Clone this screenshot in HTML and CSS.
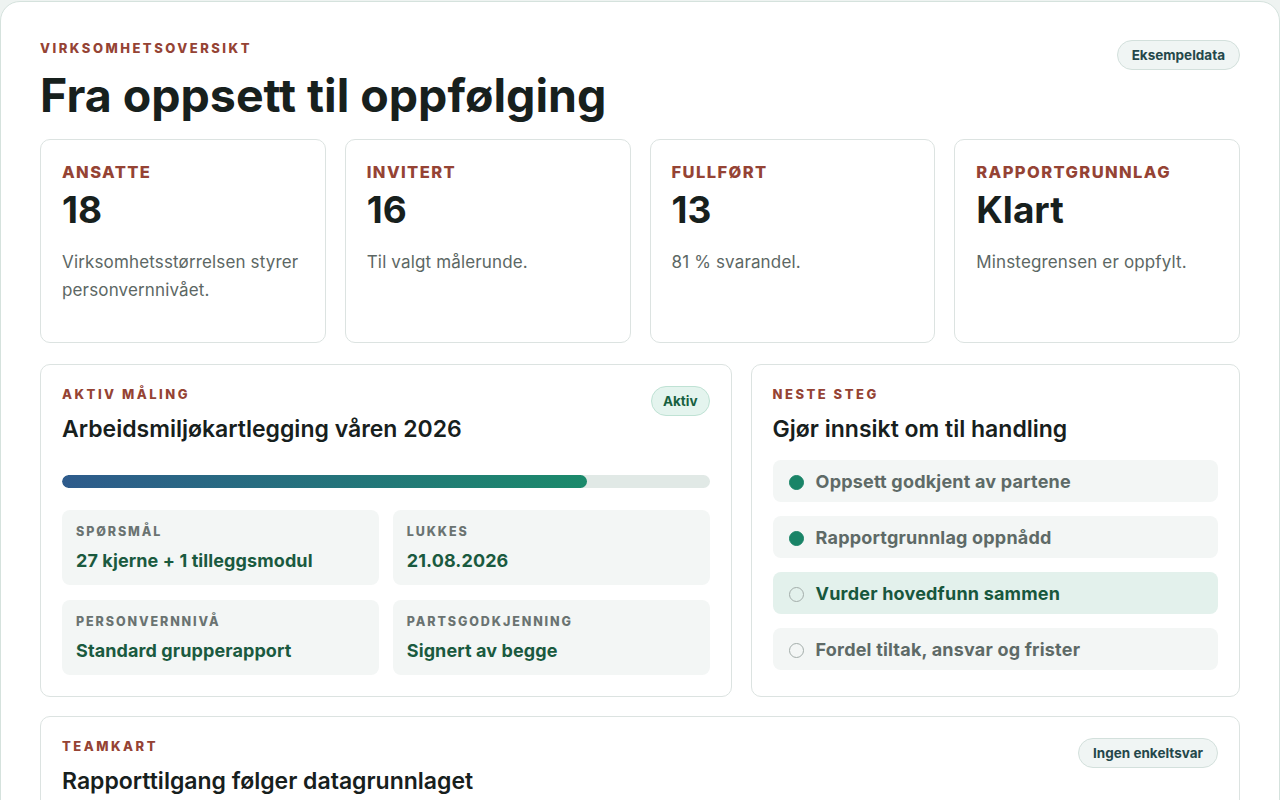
FILE: index.html
```html
<!DOCTYPE html>
<html lang="nb">
<head>
    <meta charset="UTF-8">
    <meta name="viewport" content="width=device-width, initial-scale=1.0">
    <title>Virksomhetsoversikt</title>
    <link rel="stylesheet" href="styles.css">
</head>
<body>
    <div class="panel">
        <div class="pageHead">
            <div>
                <div class="eyebrow">Virksomhetsoversikt</div>
                <h1 class="pageTitle">Fra oppsett til oppfølging</h1>
            </div>
            <span class="pill">Eksempeldata</span>
        </div>

        <!-- nøkkeltall -->
        <div class="stats">
            <div class="card stat">
                <div class="statLabel">Ansatte</div>
                <div class="statValue">18</div>
                <p class="statText">Virksomhetsstørrelsen styrer personvernnivået.</p>
            </div>
            <div class="card stat">
                <div class="statLabel">Invitert</div>
                <div class="statValue">16</div>
                <p class="statText">Til valgt målerunde.</p>
            </div>
            <div class="card stat">
                <div class="statLabel">Fullført</div>
                <div class="statValue">13</div>
                <p class="statText">81 % svarandel.</p>
            </div>
            <div class="card stat">
                <div class="statLabel">Rapportgrunnlag</div>
                <div class="statValue">Klart</div>
                <p class="statText">Minstegrensen er oppfylt.</p>
            </div>
        </div>

        <div class="split">
            <div class="card section">
                <div class="sectionHead">
                    <div>
                        <div class="eyebrow">Aktiv måling</div>
                        <h2 class="sectionTitle">Arbeidsmiljøkartlegging våren 2026</h2>
                    </div>
                    <span class="pill pillGreen">Aktiv</span>
                </div>
                <div class="progress">
                    <div class="progressFill" style="width: 81%"></div>
                </div>
                <div class="facts">
                    <div class="fact">
                        <div class="factLabel">Spørsmål</div>
                        <div class="factValue">27 kjerne + 1 tilleggsmodul</div>
                    </div>
                    <div class="fact">
                        <div class="factLabel">Lukkes</div>
                        <div class="factValue">21.08.2026</div>
                    </div>
                    <div class="fact">
                        <div class="factLabel">Personvernnivå</div>
                        <div class="factValue">Standard grupperapport</div>
                    </div>
                    <div class="fact">
                        <div class="factLabel">Partsgodkjenning</div>
                        <div class="factValue">Signert av begge</div>
                    </div>
                </div>
            </div>

            <div class="card section">
                <div class="eyebrow">Neste steg</div>
                <h2 class="sectionTitle">Gjør innsikt om til handling</h2>
                <ul class="steps">
                    <li class="step done"><span class="dot"></span>Oppsett godkjent av partene</li>
                    <li class="step done"><span class="dot"></span>Rapportgrunnlag oppnådd</li>
                    <li class="step current"><span class="dot"></span>Vurder hovedfunn sammen</li>
                    <li class="step"><span class="dot"></span>Fordel tiltak, ansvar og frister</li>
                </ul>
            </div>
        </div>

        <div class="card section">
            <div class="sectionHead">
                <div>
                    <div class="eyebrow">Teamkart</div>
                    <h2 class="sectionTitle">Rapporttilgang følger datagrunnlaget</h2>
                </div>
                <span class="pill">Ingen enkeltsvar</span>
            </div>
        </div>
    </div>
</body>
</html>
```

FILE: styles.css
```css
body {
    margin: 0;
    background-color: #eef3f1;
    font-family: Inter, "Noto Sans", sans-serif;
    color: #17201d;
}

.panel {
    margin-top: 1px;
    padding: 38px 39px 40px;
    background-color: #ffffff;
    border: 1px solid #d5e2dd;
    border-radius: 20px;
}

.pageHead {
    display: flex;
    justify-content: space-between;
    align-items: flex-start;
    margin-bottom: 18px;
}

.eyebrow {
    font-size: 13px;
    line-height: 16px;
    font-weight: 800;
    letter-spacing: 2.5px;
    text-transform: uppercase;
    color: #954334;
}

.pageTitle {
    margin: 13px 0 0;
    font-size: 46.5px;
    line-height: 52px;
    font-weight: 700;
    letter-spacing: 0;
}

.pill {
    display: inline-block;
    padding: 6px 14px;
    font-size: 13.5px;
    line-height: 16px;
    font-weight: 700;
    color: #24474a;
    background-color: #f0f5f4;
    border: 1px solid #d3e0dc;
    border-radius: 999px;
}

.pillGreen {
    padding: 6px 11px;
    color: #17603f;
    background-color: #e4f4ee;
    border-color: #bfe2d4;
}

.card {
    background-color: #ffffff;
    border: 1px solid #dce3e1;
    border-radius: 10px;
}

/* nøkkeltall */
.stats {
    display: grid;
    grid-template-columns: repeat(4, 1fr);
    gap: 19px;
    margin-bottom: 21px;
}

.stat {
    height: 204px;
    box-sizing: border-box;
    padding: 22px 21px;
}

.statLabel {
    font-size: 16.5px;
    line-height: 20px;
    font-weight: 800;
    letter-spacing: 1.4px;
    text-transform: uppercase;
    color: #954334;
}

.statValue {
    margin-top: 6px;
    font-size: 37px;
    line-height: 44px;
    font-weight: 700;
}

.statText {
    margin: 16px 0 0;
    font-size: 17px;
    line-height: 28px;
    letter-spacing: 0.15px;
    color: #5c6764;
}

.split {
    display: grid;
    grid-template-columns: 1.413fr 1fr;
    gap: 19px;
    margin-bottom: 19px;
}

.section {
    padding: 21px 21px 21px;
}

.sectionHead {
    display: flex;
    justify-content: space-between;
    align-items: flex-start;
}

.sectionTitle {
    margin: 13px 0 0;
    font-size: 23px;
    line-height: 28px;
    font-weight: 600;
    letter-spacing: 0;
}

.progress {
    margin-top: 32px;
    height: 13px;
    border-radius: 999px;
    background-color: #e1e9e6;
    overflow: hidden;
}

.progressFill {
    height: 100%;
    border-radius: 999px;
    background: linear-gradient(90deg, #2e5b8c, #1b8a6b);
}

.facts {
    display: grid;
    grid-template-columns: 1fr 1fr;
    gap: 15px 14px;
    margin-top: 22px;
}

.fact {
    padding: 14px 14px 13px;
    background-color: #f3f6f5;
    border-radius: 8px;
}

.factLabel {
    font-size: 12.5px;
    line-height: 16px;
    font-weight: 800;
    letter-spacing: 1.9px;
    text-transform: uppercase;
    color: #6a7371;
}

.factValue {
    margin-top: 10px;
    font-size: 18px;
    line-height: 22px;
    font-weight: 700;
    letter-spacing: 0.1px;
    color: #1a5a3f;
}

/* neste steg */
.steps {
    list-style: none;
    margin: 17px 0 0;
    padding: 0;
    display: flex;
    flex-direction: column;
    gap: 14px;
}

.step {
    display: flex;
    align-items: center;
    gap: 12px;
    height: 42px;
    padding: 0 16px;
    background-color: #f3f6f5;
    border-radius: 8px;
    font-size: 18px;
    font-weight: 700;
    letter-spacing: 0.2px;
    color: #5e6a67;
}

.dot {
    width: 15px;
    height: 15px;
    box-sizing: border-box;
    border: 1.5px solid #a3adaa;
    border-radius: 50%;
    flex-shrink: 0;
    margin-top: 2px;
}

.step.done .dot {
    background-color: #198467;
    border-color: #198467;
}

.step.current {
    background-color: #e3f1ec;
    color: #17573d;
}
```
